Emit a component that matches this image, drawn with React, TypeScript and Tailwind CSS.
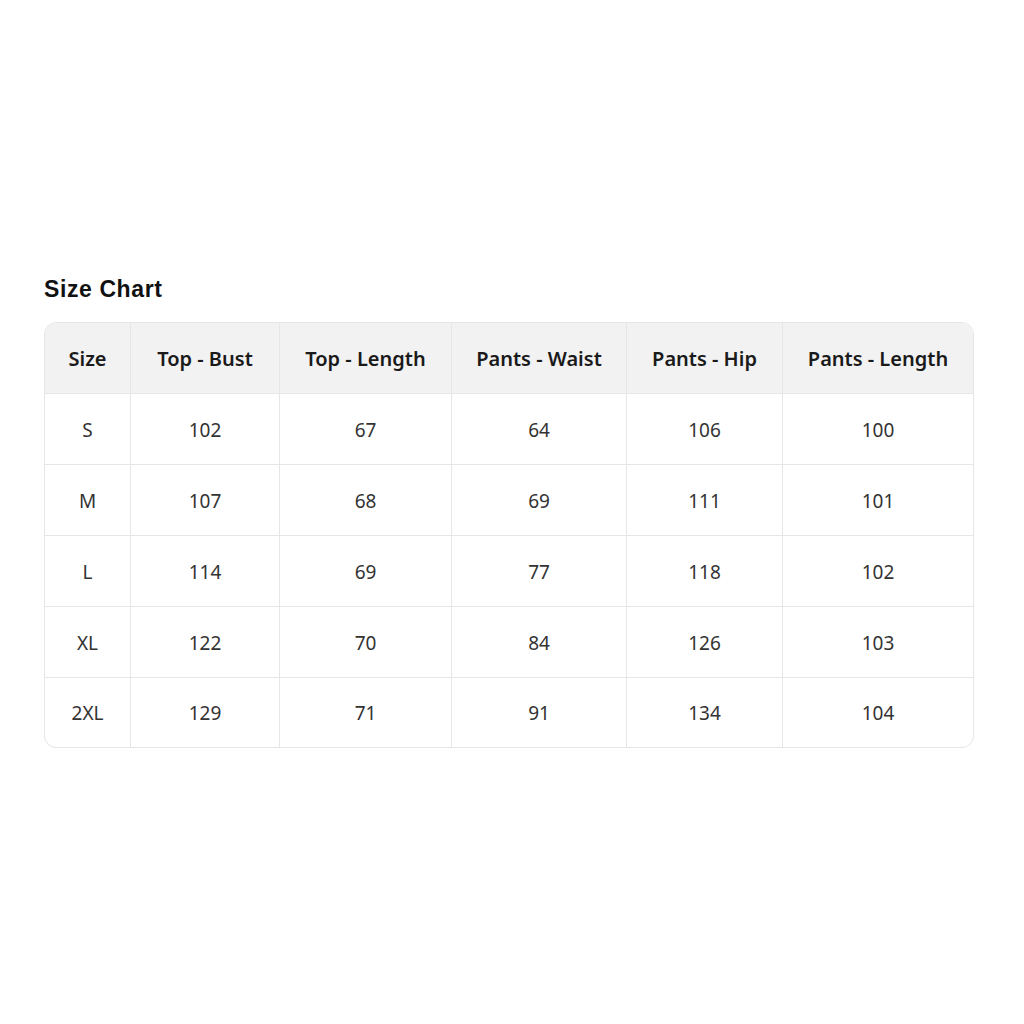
import React from "react";

const headers = ["Size", "Top - Bust", "Top - Length", "Pants - Waist", "Pants - Hip", "Pants - Length"];
const rows = [
  ["S", "102", "67", "64", "106", "100"],
  ["M", "107", "68", "69", "111", "101"],
  ["L", "114", "69", "77", "118", "102"],
  ["XL", "122", "70", "84", "126", "103"],
  ["2XL", "129", "71", "91", "134", "104"],
];

export default function App() {
  return (
    <div className="w-[1024px] h-[1024px] bg-white flex flex-col pt-[276px] pl-[44px]" style={{ fontFamily: '"Noto Sans", "Open Sans", sans-serif' }}>
      <h2 className="text-[23px] font-extrabold leading-[27px] text-[#111] tracking-[0.6px] m-0" style={{ fontFamily: '"Liberation Sans", sans-serif' }}>
        Size Chart
      </h2>
      <div className="mt-[19px] w-[930px] border border-[#e6e6e6] rounded-[12px] overflow-hidden grid grid-cols-[86px_149px_172px_175px_156px_1fr]">
        {headers.map((h, i) => (
          <div
            key={h}
            className={`h-[71px] pt-[2px] flex items-center justify-center bg-[#f2f2f2] text-[20px] font-semibold text-[#1a1a1a] border-b border-[#e6e6e6] ${i < 5 ? "border-r" : ""}`}
          >
            {h}
          </div>
        ))}
        {rows.map((r, ri) =>
          r.map((c, ci) => (
            <div
              key={ri + "-" + ci}
              className={`${ri < 4 ? "h-[71px] border-b" : "h-[69px]"} pt-[2px] flex items-center justify-center text-[19px] text-[#333] border-[#e6e6e6] ${ci < 5 ? "border-r" : ""}`}
            >
              {c}
            </div>
          ))
        )}
      </div>
    </div>
  );
}
